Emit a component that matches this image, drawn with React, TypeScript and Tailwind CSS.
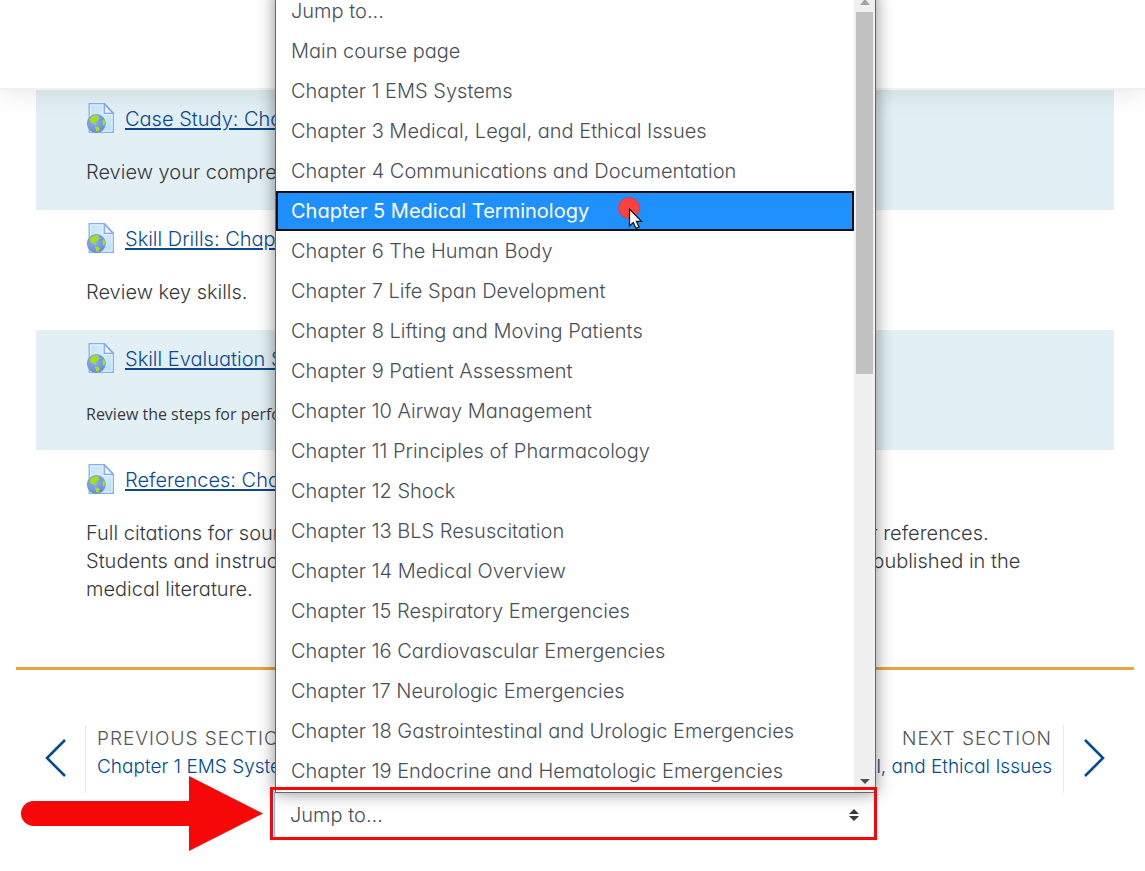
import React, { useState } from 'react';

interface Activity {
  title: string;
  lines: string[];
  small?: boolean;
}

const activities: Activity[] = [
  { title: 'Case Study: Chapter 2', lines: ['Review your comprehension.'] },
  { title: 'Skill Drills: Chapter 2', lines: ['Review key skills.'] },
  { title: 'Skill Evaluation Sheets', lines: ['Review the steps for performing skills.'], small: true },
  {
    title: 'References: Chapter 2',
    lines: [
      'Full citations for sources that are used throughout this chapter, together with all other references.',
      'Students and instructors can also use these citations to locate the latest information published in the',
      'medical literature.',
    ],
  },
];

const sections = [
  'Jump to...',
  'Main course page',
  'Chapter 1 EMS Systems',
  'Chapter 3 Medical, Legal, and Ethical Issues',
  'Chapter 4 Communications and Documentation',
  'Chapter 5 Medical Terminology',
  'Chapter 6 The Human Body',
  'Chapter 7 Life Span Development',
  'Chapter 8 Lifting and Moving Patients',
  'Chapter 9 Patient Assessment',
  'Chapter 10 Airway Management',
  'Chapter 11 Principles of Pharmacology',
  'Chapter 12 Shock',
  'Chapter 13 BLS Resuscitation',
  'Chapter 14 Medical Overview',
  'Chapter 15 Respiratory Emergencies',
  'Chapter 16 Cardiovascular Emergencies',
  'Chapter 17 Neurologic Emergencies',
  'Chapter 18 Gastrointestinal and Urologic Emergencies',
  'Chapter 19 Endocrine and Hematologic Emergencies',
];

const UrlIcon = () => (
  <svg className="h-[30px] w-7 shrink-0" viewBox="0 0 28 30" aria-hidden="true">
    <defs>
      <linearGradient id="sheet" x1="0" y1="0" x2="1" y2="1">
        <stop offset="0" stopColor="#c3e2fb" />
        <stop offset="0.5" stopColor="#d3ecfb" />
        <stop offset="1" stopColor="#b4d8f6" />
      </linearGradient>
      <radialGradient id="globe" cx="0.4" cy="0.35" r="0.7">
        <stop offset="0" stopColor="#8fb2ee" />
        <stop offset="1" stopColor="#6288d8" />
      </radialGradient>
    </defs>
    <path d="M3.2 0.7H18.5L27.4 10V29.3H3.2Z" fill="url(#sheet)" stroke="#86b0f0" strokeWidth="1.3" />
    <path d="M4.5 2H17V11.3H26V28H4.5Z" fill="none" stroke="#e5f4fd" />
    <path d="M18.3 1V10.4H27Z" fill="#eaf5fd" stroke="#86a8ec" strokeWidth="1.3" />
    <circle cx="10.3" cy="20.5" r="9.4" fill="url(#globe)" />
    <path d="M3.6 17Q5.6 12.5 9.8 12.3L13.3 12.8 12 14.2 14 15.2 11.8 16.6 10.4 18.8 8.8 19.2 10.4 20.8 9.8 22 7.2 20 5.2 19.8ZM16.6 17.5L18.4 16 19 20 18 23.5 16.8 21.5ZM8.6 23.6L12 23.8 13.8 25.4 12.4 28.4 10.2 28.6 9.8 26Z" fill="#a5e012" />
  </svg>
);

const ActivityRow = ({ activity, shaded }: { activity: Activity; shaded: boolean }) => (
  <li className={`min-h-[120px] pt-[13px] pr-4 pl-[50px] last:pt-[14px] ${shaded ? 'bg-[#e2eff5]' : ''}`}>
    <div className="flex items-start gap-[11px]">
      <UrlIcon />
      <a href="#activity" className="pt-[2px] whitespace-nowrap text-[#0b4a8f] underline underline-offset-2">
        {activity.title}
      </a>
    </div>
    <div className={activity.small ? "mt-[27px] font-['Open_Sans'] text-[16px] leading-7 font-normal" : 'mt-[25px] leading-7'}>
      {activity.lines.map((line) => (
        <p key={line} className="whitespace-nowrap">
          {line}
        </p>
      ))}
    </div>
  </li>
);

const Chevron = ({ flip }: { flip?: boolean }) => (
  <svg className="h-10 w-6 shrink-0" viewBox="0 0 24 40" fill="none" stroke="#004b91" strokeWidth="2.6" aria-hidden="true">
    <path d={flip ? 'M2 1L20 19L2 37' : 'M22 1L4 19L22 37'} />
  </svg>
);

const Pointer = () => (
  <svg className="absolute top-[2px] left-[339px] h-9 w-7" viewBox="0 0 28 36" aria-hidden="true">
    <circle cx="12" cy="13" r="10.5" fill="#ff4040" stroke="#d83a4c" />
    <path d="M12.5 14V31L16.3 27.6L19 33.4L22 32L19.4 26.4H24.5Z" fill="#fff" stroke="#111" strokeWidth="1.2" />
  </svg>
);

const SectionMenu = ({ active, onPick }: { active: number; onPick: (index: number) => void }) => (
  <div className="absolute right-0 bottom-full left-px z-10 -mb-px flex border border-t-0 border-[#666] bg-white shadow-[0_0_16px_rgba(0,0,0,0.45)]">
    <ul role="listbox" aria-label="Sections" className="mb-px flex-1">
      {sections.map((section, index) => (
        <li
          key={section}
          role="option"
          aria-selected={index === active}
          onClick={() => onPick(index)}
          className={`relative flex h-10 items-center whitespace-nowrap ${
            index === active
              ? 'border-2 border-[#101010] bg-[#1e90ff] px-[13px] font-normal text-white'
              : 'px-[15px] text-[#495057]'
          }`}
        >
          {section}
          {index === active && <Pointer />}
        </li>
      ))}
    </ul>
    <div className="flex w-[21px] flex-col items-center justify-between bg-[#f0f0f0] pt-2 pb-2">
      <div className="flex flex-col items-center gap-[7px]">
        <svg className="h-[6px] w-[10px]" viewBox="0 0 10 6" aria-hidden="true">
          <path d="M0 6L5 0L10 6Z" fill="#a3a3a3" />
        </svg>
        <div className="h-[362px] w-[17px] bg-[#c1c1c1]" />
      </div>
      <svg className="h-[5px] w-[10px]" viewBox="0 0 10 5" aria-hidden="true">
        <path d="M0 0H10L5 5Z" fill="#505050" />
      </svg>
    </div>
  </div>
);

const JumpTo = () => {
  const [active, setActive] = useState(5);

  return (
    <div className="relative mx-auto -mt-px w-[602px]">
      <label htmlFor="jump" className="sr-only">
        Jump to section
      </label>
      <select
        id="jump"
        defaultValue="Jump to..."
        className="block h-[46px] w-full appearance-none border border-[#80bdff] bg-white px-[15px] text-[#495057]"
      >
        {sections.map((section) => (
          <option key={section}>{section}</option>
        ))}
      </select>
      <svg className="pointer-events-none absolute top-[17px] right-[17px] h-3 w-[10px]" viewBox="0 0 10 12" aria-hidden="true">
        <path d="M0 5L5 0L10 5ZM0 7H10L5 12Z" fill="#343a40" />
      </svg>
      <SectionMenu active={active} onPick={setActive} />

      {/* Callout frame and arrow */}
      <div className="pointer-events-none absolute -top-[5px] -right-px -bottom-[2px] -left-1 z-20 border-3 border-[#f60808]" />
      <svg className="pointer-events-none absolute top-[-16px] left-[-253px] h-[75px] w-[243px]" viewBox="0 0 243 75" aria-hidden="true">
        <path d="M12.5 25H168V0L242 37.5L168 75V50H12.5A12.5 12.5 0 0 1 12.5 25Z" fill="#f60808" />
      </svg>
    </div>
  );
};

export default function App() {
  return (
    <div className="overflow-hidden bg-white pb-8 font-['Inter','Liberation_Sans',sans-serif] text-[20px] leading-7 font-light text-[#373a3c] [font-feature-settings:'cv11']">
      <header className="relative h-[90px] border-b-2 border-[#f0f0f0] bg-white shadow-[0_4px_24px_rgba(0,0,0,0.09)]" />
      <main className="pr-[11px] pl-4">
        <ul className="mr-5 ml-5">
          {activities.map((activity, index) => (
            <ActivityRow key={activity.title} activity={activity} shaded={index % 2 === 0} />
          ))}
        </ul>
        <hr className="mt-16 border-0 border-t-3 border-[#e6a540]" />
        <nav aria-label="Sections" className="mt-[55px] flex justify-between text-[19px]">
          <a href="#previous" className="flex items-center">
            <span className="flex w-[69px] justify-end pr-[18px]">
              <Chevron />
            </span>
            <span className="h-[68px] border-l border-[#e9e9e9] pl-[11px] whitespace-nowrap">
              <span className="block tracking-[1px] text-[#555]">PREVIOUS SECTION</span>
              <span className="block text-[#004b91]">Chapter 1 EMS Systems</span>
            </span>
          </a>
          <a href="#next" className="flex items-center text-right">
            <span className="h-[68px] border-r border-[#e9e9e9] pr-[11px] whitespace-nowrap">
              <span className="block tracking-[1px] text-[#555]">NEXT SECTION</span>
              <span className="block text-[#004b91]">Chapter 3 Medical, Legal, and Ethical Issues</span>
            </span>
            <span className="flex w-[70px] pl-[19px]">
              <Chevron flip />
            </span>
          </a>
        </nav>
        <JumpTo />
      </main>
    </div>
  );
}
